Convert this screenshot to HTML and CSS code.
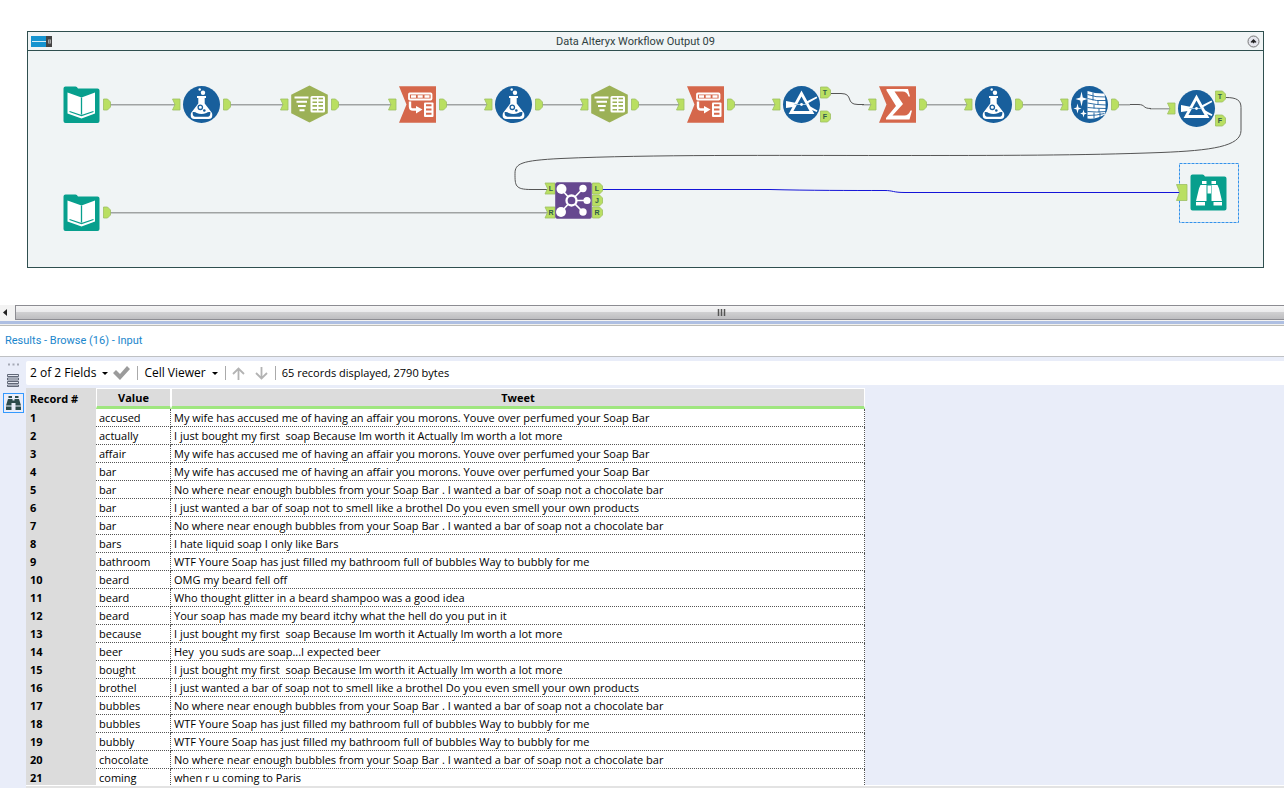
FILE: index.html
```html
<!DOCTYPE html>
<html lang="en">
<head>
<meta charset="utf-8">
<title>Data Alteryx Workflow Output 09</title>
<link rel="stylesheet" href="styles.css">
</head>
<body>
<main class="canvas">
  <section class="container">
    <header class="container-head">
      <svg class="toggle" width="21" height="11" viewBox="0 0 21 11"><path fill="#1593cf" d="M0 0h15v11H0z"/><path fill="#444" d="M15 0h6v11h-6z"/><path stroke="#d5eef8" d="M1 5.500h14"/><path fill="#a5a5a5" d="M17 4l1-1h1l1 1v3l-1 1h-1l-1-1z"/><path stroke="#555" stroke-width=".6" d="M18.500 3v5"/></svg>
      <h1 class="container-title">Data Alteryx Workflow Output 09</h1>
      <button class="collapse" aria-label="Collapse container"><svg width="13" height="13" viewBox="0 0 13 13"><circle cx="6.500" cy="6.500" r="5.500" fill="#e4e5ec" stroke="#777"/><path d="M3.500 7l3-3 3 3-1 .8-.8-.6-1.200 1.300-1.200-1.300-.8.600z" fill="#222"/></svg></button>
    </header>
    <svg class="diagram" width="1235" height="216" viewBox="28 51 1235 216" role="img" aria-label="Workflow">
      <defs>
        <path id="out" d="M.5-5.500h4L7.500-2.500v5l-3 3h-4z" fill="#b9df62" stroke="#9dbf62" stroke-width=".8"/>
        <path id="in" d="M0-5.500h7.500v11H0L2.500 0z" fill="#b9df62" stroke="#9dbf62" stroke-width=".8"/>
        <path id="outL" d="M.5-5.500h7l3 3v5l-3 3h-7z" fill="#b9df62" stroke="#9dbf62" stroke-width=".8"/>
        <path id="inL" d="M0-5.500h10v11H0L2.500 0z" fill="#b9df62" stroke="#9dbf62" stroke-width=".8"/>
        <g id="book">
          <path d="M-16-18h10q1.500 0 2.500 2h19.500q2 0 2 2v30.500q0 2-2 2h-32q-2 0-2-2v-32.500q0-2 2-2z" fill="#079f8d"/>
          <path d="M-14-12L0-7l13.500-5V9L0 14-14 9z" fill="#fff"/>
          <path d="M0-7V10M-12 7L0 11 12 7" stroke="#079f8d" stroke-width="1.300" fill="none"/>
        </g>
        <g id="flask">
          <circle r="18.500" fill="#185f9c"/>
          <path d="M-4.500-8.500h9v2H3.200v5.500L10.500 8.500q1.500 5.500-3 6H-7.500q-4.500-.5-3-6L-3.200-1v-5.500h-1.300z" fill="#fff"/>
          <path d="M-8.800 7.500q2.500-.5 4 1 4.800 2 9.600 0 1.500-1.500 4-1 .5 4.500-2.800 4.800H-6q-3.300-.3-2.800-4.800z" fill="#185f9c"/>
          <circle cx="-1.200" cy="2.800" r="2.200" fill="#fff" stroke="#185f9c" stroke-width="1.300"/>
          <circle cx="2.800" cy="6" r="1.300" fill="#185f9c"/>
          <circle cx="-1.800" cy="-15" r="1.200" fill="#fff"/><circle cx="1.500" cy="-11.800" r="2.200" fill="#fff"/>
        </g>
        <g id="select">
          <path d="M0-18.500L18.300-9.200V9.200L0 18.500-18.300 9.200V-9.200z" fill="#9cb156"/>
          <path d="M-15-6.500H-1M-13-2.300H-2.500M-11.500 2H-3.800M-10 6.300H-5" stroke="#fff" stroke-width="2.100"/>
          <rect x="1" y="-8" width="14.500" height="16.500" rx="1.500" fill="#fff"/>
          <path d="M3-5.500h4.500m1.500 0h4.500M3-1.800h4.500m1.500 0h4.500M3 1.900h4.500m1.500 0h4.500M3 5.700h4.500m1.500 0h4.500" stroke="#9cb156" stroke-width="1.600"/>
        </g>
        <g id="transpose">
          <path d="M-18.500-18.300h37v36.600h-37L-11 0z" fill="#d5674b"/>
          <rect x="-8.500" y="-11" width="22.500" height="6" rx=".8" fill="none" stroke="#fff" stroke-width="1.800"/>
          <path d="M-6.500-8h5M.2-8h5M7-8h5" stroke="#fff" stroke-width="2.600"/>
          <path d="M-7.500-3v5q0 3 3 3H0" fill="none" stroke="#fff" stroke-width="2.400"/><path d="M-1.500 1.500L5 5l-6.500 4z" fill="#fff"/>
          <rect x="6.500" y="-2" width="9.500" height="14.500" rx="1" fill="#fff"/>
          <path d="M8.500.8h5.500m-5.500 4.200h5.500m-5.500 4.300h5.500" stroke="#d5674b" stroke-width="2"/>
        </g>
        <g id="filter">
          <circle r="18.500" fill="#185f9c"/>
          <path d="M-15.500-3.500L-5-1.500V2l-10.500 1.500zM5-3l10-5 .8 1.500L6-1zM7 1l9 5-.8 1.500L7 4z" fill="#fff"/>
          <path d="M0-11L10.500 8H-10.500z" fill="#185f9c" stroke="#fff" stroke-width="2.800"/>
          <path d="M-7 0h12" stroke="#9ec4e0" stroke-width="1"/><circle r="1.400" fill="#fff"/>
        </g>
        <g id="sum">
          <path d="M-18.500-18.300h37v36.600h-37L-11 0z" fill="#d5674b"/>
          <path d="M-11-15.500H10.500l2 7.500h-1.500q-1.500-5-6-5H-3L5.500-.5-5 11H7q4 0 6-5h1.500L12 15h-23.500v-1.500L-1.500 1.500-11-14z" fill="#fff"/>
        </g>
        <g id="cleanse">
          <circle r="18.500" fill="#185f9c"/>
          <path d="M-2-13.500q9 3 17 2.500 2 11 .5 21Q7 15-2 14z" fill="#fff"/>
          <path d="M-2-10q8 3 18 2.500M-2-6q9 3 18.500 2M-2-1.500q9 2 19 2M-2 3q9 1 18.500 1M-2 7q9 1 18.500 0M-2 11q9 0 17-2M3.500-12v8m5 0v4m-4 0v4m5 0v4m-5 0v6m6-6v5" fill="none" stroke="#185f9c" stroke-width=".9"/>
          <path d="M-8-13l1.300 6 4.700 1.500-4.700 1.500L-8 2l-1.300-6-4.700-1.500L-9.300-7zM-12-1l1 4 3 1-3 1-1 4-1-4-3-1 3-1zM-6 5l.8 3 2.500 1-2.500 1-.8 3-.8-3-2.500-1 2.500-1z" fill="#fff"/>
        </g>
        <g id="join">
          <rect x="-18.300" y="-18.300" width="36.600" height="36.600" rx="2" fill="#66488f"/>
          <path d="M-12-11L-2 0l-10 11M9.500-12L-2 0l11.500 11.500M-2 0h15" fill="none" stroke="#fff" stroke-width="1.700"/>
          <circle cx="-12" cy="-11.500" r="5" fill="#fff"/><circle cx="-12.500" cy="11.500" r="5" fill="#fff"/>
          <circle cx="9.500" cy="-12" r="3.700" fill="#fff"/><circle cx="13.500" cy="0" r="3.600" fill="#fff"/><circle cx="9.500" cy="11.500" r="3.700" fill="#fff"/>
          <circle cx="-2" cy="0" r="5" fill="#66488f" stroke="#fff" stroke-width="2.300"/>
        </g>
        <g id="browse">
          <path d="M-16-18h10q1.500 0 2.500 2h19.500q2 0 2 2v30q0 2-2 2h-32q-2 0-2-2v-32q0-2 2-2z" fill="#079f8d"/>
          <path d="M-6.500-11.500h4.500v3h-4.500zM3-11.500h4.500v3H3zM-8-7.500h6v16h-10.500L-9.500-4zM9-7.500H3v16h10.500L10.500-4zM-1-7h3.500v8H-1zM-12.500 9.500h9V13h-9zM5 9.500h8.500V13H5z" fill="#fff"/>
        </g>
      </defs>
      <g class="wires">
        <path d="M110 104.800h65M230 104.800h54M338 104.800h53M446 104.800h41M542 104.800h41M638 104.800h41M734 104.800h41M926 104.800h41M1022 104.800h41M1118 104.800h12M1150 108.800h20M110 212.800h438M862 104.800h9"/>
      </g>
      <g class="links">
        <path d="M831 93.500h10c13 0 4 11 17 11h6M1130 104.500h8c8 0 4 4 13 4M1226 97.500c11 0 15 3 15 10v23c0 16-30 20-80 22-80 3-160 3-270 3-120 0-240-1-330 3-40 2-46 5-46 15 0 12 0 16 16 16h17"/>
      </g>
      <path class="active-link" d="M602 189.500h168c40 1 80 1 115 1 8 0 8 2 20 2h276"/>
      <use href="#book" x="81.500" y="104.500"/><use href="#out" x="103" y="104.500"/>
      <use href="#in" x="172.500" y="104.500"/><use href="#flask" x="201.500" y="104.500"/><use href="#out" x="223" y="104.500"/>
      <use href="#in" x="280.500" y="104.500"/><use href="#select" x="309.500" y="104"/><use href="#out" x="331" y="104.500"/>
      <use href="#in" x="388.500" y="104.500"/><use href="#transpose" x="417.500" y="104.500"/><use href="#out" x="439" y="104.500"/>
      <use href="#in" x="484.500" y="104.500"/><use href="#flask" x="513.500" y="104.500"/><use href="#out" x="535" y="104.500"/>
      <use href="#in" x="580.500" y="104.500"/><use href="#select" x="609.500" y="104"/><use href="#out" x="631" y="104.500"/>
      <use href="#in" x="676.500" y="104.500"/><use href="#transpose" x="705.500" y="104.500"/><use href="#out" x="727" y="104.500"/>
      <use href="#in" x="772.500" y="104.500"/><use href="#filter" x="801.500" y="104.500"/><use href="#outL" x="820" y="92.500"/><use href="#outL" x="820" y="116.500"/>
      <use href="#in" x="868.500" y="104.500"/><use href="#sum" x="897.500" y="104.500"/><use href="#out" x="919" y="104.500"/>
      <use href="#in" x="964.500" y="104.500"/><use href="#flask" x="993.500" y="104.500"/><use href="#out" x="1015" y="104.500"/>
      <use href="#in" x="1060.500" y="104.500"/><use href="#cleanse" x="1089.500" y="104.500"/><use href="#out" x="1111" y="104.500"/>
      <use href="#in" x="1167.500" y="108.500"/><use href="#filter" x="1196.500" y="108.500"/><use href="#outL" x="1215" y="96.500"/><use href="#outL" x="1215" y="120.500"/>
      <use href="#book" x="81.500" y="212.500"/><use href="#out" x="103" y="212.500"/>
      <use href="#inL" x="545" y="188.500"/><use href="#inL" x="545" y="212.500"/>
      <use href="#outL" x="592" y="188.500"/><use href="#outL" x="592" y="200.500"/><use href="#outL" x="592" y="212.500"/>
      <use href="#join" x="573.500" y="200.500"/>
      <rect x="1179.500" y="163.500" width="59" height="59" fill="none" stroke="#3492ea" stroke-dasharray="3 1"/>
      <path d="M1176.500 184.500h10.500v16h-10.500l3-8z" fill="#b9df62" stroke="#9dbf62" stroke-width=".8"/>
      <use href="#browse" x="1208.500" y="192.500"/>
      <g class="port-labels">
        <text x="825" y="95">T</text><text x="825" y="119">F</text>
        <text x="1220" y="99">T</text><text x="1220" y="123">F</text>
        <text x="551" y="191">L</text><text x="551" y="215">R</text>
        <text x="597" y="191">L</text><text x="597" y="203">J</text><text x="597" y="215">R</text>
      </g>
    </svg>
  </section>
</main>

<div class="scrollbar">
  <button class="scroll-left" aria-label="Scroll left"><svg width="5" height="7" viewBox="0 0 5 7"><path d="M5 0v7L1 3.500z" fill="#222"/></svg></button>
  <div class="thumb"><svg width="9" height="8" viewBox="0 0 9 8"><path d="M1.500 0v7M4.500 0v7M7.500 0v7" stroke="#555" stroke-width="1.500"/></svg></div>
</div>
<div class="splitter"></div>

<section class="results">
  <h2 class="results-title">Results - Browse (16) - Input</h2>
  <div class="results-body">
    <nav class="rail">
      <svg class="dots" width="11" height="3" viewBox="0 0 11 3"><path d="M0 .5h2v2H0zM4.500.5h2v2h-2zM9 .5h2v2H9z" fill="#a5a9b5"/></svg>
      <button class="rail-btn" aria-label="Messages"><svg width="12" height="13" viewBox="0 0 12 13"><path d="M.5.500h11v2H.5zM.5 4h11v2H.5zM.5 7.500h11v2H.5zM.5 11h11v1.500H.5z" fill="#e4e8f2" stroke="#51596a" stroke-width=".9"/></svg></button>
      <button class="rail-btn selected" aria-label="Data"><svg width="17" height="16" viewBox="0 0 17 16"><path d="M3.500 1H7v2H3.500zM10 1h3.500v2H10zM3 4h4.500v1.500h2V4H14l2 6.500h-5.500V8h-4v2.500H1zM1 11.500h5.500V15H1zM10.500 11.500H16V15h-5.500z" fill="#2d4b4b"/></svg></button>
    </nav>
    <div class="pane">
      <div class="toolbar">
        <button class="tool fields">2 of 2 Fields <i class="caret"></i></button>
        <button class="tool check" aria-label="Apply"><svg width="17" height="14" viewBox="0 0 17 14"><path d="M0 7l3-3 4 4 7-8 3 3-10 11z" fill="#9b9b9b"/></svg></button>
        <span class="sep"></span>
        <button class="tool viewer">Cell Viewer <i class="caret"></i></button>
        <span class="sep"></span>
        <button class="tool up" aria-label="Previous"><svg width="13" height="13" viewBox="0 0 13 13"><path d="M6.500 13V1.500M1 7l5.500-5.500L12 7" fill="none" stroke="#b3b3b3" stroke-width="1.800"/></svg></button>
        <button class="tool down" aria-label="Next"><svg width="13" height="13" viewBox="0 0 13 13"><path d="M6.500 0v11.500M1 6l5.500 5.500L12 6" fill="none" stroke="#b3b3b3" stroke-width="1.800"/></svg></button>
        <span class="sep"></span>
        <span class="status">65 records displayed, 2790 bytes</span>
      </div>
      <div class="grid-wrap">
        <table class="grid">
          <colgroup><col class="c-rec"><col class="c-val"><col class="c-tweet"></colgroup>
          <thead><tr><th class="rec">Record #</th><th>Value</th><th>Tweet</th></tr></thead>
          <tbody>
            <tr><th>1</th><td>accused</td><td>My wife has accused me of having an affair you morons. Youve over perfumed your Soap Bar</td></tr>
            <tr><th>2</th><td>actually</td><td>I just bought my first  soap Because Im worth it Actually Im worth a lot more</td></tr>
            <tr><th>3</th><td>affair</td><td>My wife has accused me of having an affair you morons. Youve over perfumed your Soap Bar</td></tr>
            <tr><th>4</th><td>bar</td><td>My wife has accused me of having an affair you morons. Youve over perfumed your Soap Bar</td></tr>
            <tr><th>5</th><td>bar</td><td>No where near enough bubbles from your Soap Bar . I wanted a bar of soap not a chocolate bar</td></tr>
            <tr><th>6</th><td>bar</td><td>I just wanted a bar of soap not to smell like a brothel Do you even smell your own products</td></tr>
            <tr><th>7</th><td>bar</td><td>No where near enough bubbles from your Soap Bar . I wanted a bar of soap not a chocolate bar</td></tr>
            <tr><th>8</th><td>bars</td><td>I hate liquid soap I only like Bars</td></tr>
            <tr><th>9</th><td>bathroom</td><td>WTF Youre Soap has just filled my bathroom full of bubbles Way to bubbly for me</td></tr>
            <tr><th>10</th><td>beard</td><td>OMG my beard fell off</td></tr>
            <tr><th>11</th><td>beard</td><td>Who thought glitter in a beard shampoo was a good idea</td></tr>
            <tr><th>12</th><td>beard</td><td>Your soap has made my beard itchy what the hell do you put in it</td></tr>
            <tr><th>13</th><td>because</td><td>I just bought my first  soap Because Im worth it Actually Im worth a lot more</td></tr>
            <tr><th>14</th><td>beer</td><td>Hey  you suds are soap...I expected beer</td></tr>
            <tr><th>15</th><td>bought</td><td>I just bought my first  soap Because Im worth it Actually Im worth a lot more</td></tr>
            <tr><th>16</th><td>brothel</td><td>I just wanted a bar of soap not to smell like a brothel Do you even smell your own products</td></tr>
            <tr><th>17</th><td>bubbles</td><td>No where near enough bubbles from your Soap Bar . I wanted a bar of soap not a chocolate bar</td></tr>
            <tr><th>18</th><td>bubbles</td><td>WTF Youre Soap has just filled my bathroom full of bubbles Way to bubbly for me</td></tr>
            <tr><th>19</th><td>bubbly</td><td>WTF Youre Soap has just filled my bathroom full of bubbles Way to bubbly for me</td></tr>
            <tr><th>20</th><td>chocolate</td><td>No where near enough bubbles from your Soap Bar . I wanted a bar of soap not a chocolate bar</td></tr>
            <tr><th>21</th><td>coming</td><td>when r u coming to Paris</td></tr>
          </tbody>
        </table>
      </div>
      <div class="pane-edge"></div>
    </div>
  </div>
</section>
</body>
</html>
```
FILE: styles.css
```css
* { box-sizing: border-box; }
body {
  margin: 0;
  height: 100vh;
  display: flex;
  flex-direction: column;
  overflow: hidden;
  background: #fff;
  color: #000;
  font: 11px/16px "Open Sans", "Noto Sans", sans-serif;
}
button { border: 0; padding: 0; background: none; font: inherit; color: inherit; }
svg { display: block; flex: none; }

.canvas { flex: none; padding: 31px 20px 37px 27px; }
.container { border: 1px solid #2f4f4f; background: #f0f4f5; overflow: hidden; }
.container-head {
  display: flex;
  align-items: center;
  height: 19px;
  padding: 0 3px;
  border-bottom: 1px solid #2f4f4f;
}
.container-title {
  flex: 1;
  margin: 0;
  padding-right: 28px;
  text-align: center;
  font: 11px/19px Roboto, sans-serif;
  color: #2f4040;
}

.wires path { fill: none; stroke: #a0a3a3; stroke-width: 1.6; }
.links path { fill: none; stroke: #555; stroke-width: 1; }
.active-link { fill: none; stroke: #1414d8; stroke-width: 1; }
.port-labels text { font: bold 7px "Liberation Sans", sans-serif; fill: #2f5a4a; text-anchor: middle; }

.scrollbar { flex: none; display: flex; align-items: stretch; height: 15px; background: #f3f3f3; }
.scroll-left { width: 15px; padding-left: 2px; }
.thumb {
  flex: 1;
  display: flex;
  align-items: center;
  justify-content: center;
  padding-left: 143px;
  border: 1px solid #8c8c92;
  border-right: 0;
  background: linear-gradient(#f5f5f5 0, #e9e9eb 50%, #cfcfd1 50%, #bdbdc0 100%);
}
.splitter {
  flex: none;
  height: 6px;
  border-top: 1px solid #f3f3f3;
  border-bottom: 1px solid #bcbcb8;
  background: linear-gradient(#aebfe2 0 3px, #f0f0ee 3px);
}

.results { flex: 1; min-height: 0; display: flex; flex-direction: column; }
.results-title {
  flex: none;
  margin: 0;
  height: 31px;
  padding: 6px 5px;
  border-bottom: 1px solid #bfc1c4;
  font: 11px/17px Roboto, sans-serif;
  color: #1a86cc;
}
.results-body { flex: 1; min-height: 0; display: flex; background: #e9edf9; }
.rail { flex: none; width: 26px; display: flex; flex-direction: column; align-items: center; padding-top: 6px; }
.rail-btn { display: flex; align-items: center; justify-content: center; width: 21px; height: 20px; margin-top: 4px; }
.rail-btn.selected { margin-top: 3px; border: 1px solid #3399ff; }

.pane { flex: 1; min-width: 0; display: flex; flex-direction: column; padding-top: 4px; }
.toolbar {
  flex: none;
  display: flex;
  align-items: center;
  height: 24px;
  padding-left: 4px;
  background: #fff;
  border-radius: 2px 0 0 2px;
  font-size: 12px;
}
.tool { display: flex; align-items: center; gap: 6px; white-space: nowrap; }
.caret { border: 3px solid transparent; border-top-color: #000; border-bottom: 0; }
.sep { width: 1px; height: 14px; margin: 0 6px 0 7px; background: #aaa; }
.check { margin-left: 5px; }
.up { margin-right: 10px; }
.status { font-size: 11px; }

.grid-wrap { flex: 1; min-height: 0; overflow: hidden; padding-top: 3px; }
.grid { width: 839px; table-layout: fixed; border-collapse: separate; border-spacing: 0; background: #fff; }
.c-rec { width: 70px; }
.c-val { width: 75px; }
.grid th, .grid td { height: 18px; padding: 0 3px; line-height: 17px; white-space: pre; }
.grid td { border-bottom: 1px dotted #555; border-right: 1px dotted #555; }
.grid tbody th { background: #dcdcdc; border-bottom: 1px solid #dcdcdc; text-align: left; padding-left: 4px; }
.grid thead th {
  height: 21px;
  border-top: 1px solid #fff;
  border-right: 1px solid #fff;
  border-left: 1px solid #fff;
  border-bottom: 3px solid #9fe67f;
  background: #dcdcdc;
}
.grid thead .rec { border: 0; text-align: left; padding-left: 4px; }
.pane-edge { flex: none; height: 3px; border-top: 1px solid #fff; background: #e3e3e3; }
```
